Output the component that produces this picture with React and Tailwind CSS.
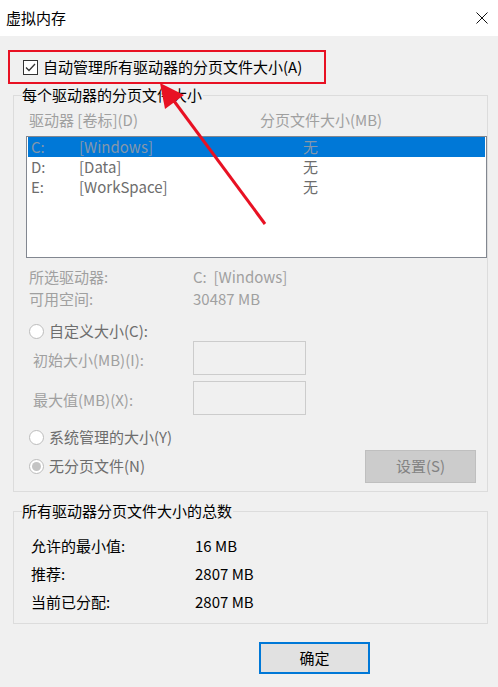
import React from 'react';

const FONT = { fontFamily: '"Noto Sans CJK SC", "Noto Sans", sans-serif' };

// Windows-style radio button (disabled look)
const Radio = ({ checked, label }) => (
  <div className="flex items-center h-[20px]">
    <span className="w-[15px] h-[15px] rounded-full border border-[#bcbcbc] bg-white flex items-center justify-center">
      {checked && <span className="w-[9px] h-[9px] rounded-full bg-[#c4c4c4]" />}
    </span>
    <span className="ml-[5px] text-[#6d6d6d]">{label}</span>
  </div>
);

const GroupBox = ({ title, className, children }) => (
  <div className={`relative border border-[#dcdcdc] ${className}`}>
    <span className="absolute left-[8px] top-[-11px] leading-[20px] bg-[#f0f0f0] pr-[1px] text-black">
      {title}
    </span>
    {children}
  </div>
);

const drives = [
  { letter: 'C:', label: '[Windows]', size: '无', selected: true },
  { letter: 'D:', label: '[Data]', size: '无' },
  { letter: 'E:', label: '[WorkSpace]', size: '无' },
];

const totals = [
  ['允许的最小值:', '16 MB'],
  ['推荐:', '2807 MB'],
  ['当前已分配:', '2807 MB'],
];

export default function App() {
  return (
    <div className="relative w-[498px] h-[687px] overflow-hidden text-[15px] leading-[20px] bg-[#f0f0f0]" style={FONT}>
      {/* Title bar */}
      <div className="h-[36px] bg-white flex items-center justify-between pl-[6px] pr-[10px]">
        <span className="text-black">虚拟内存</span>
        <svg width="12" height="12" viewBox="0 0 12 12" className="mr-[0px]">
          <path d="M0.5 0.5 L11.5 11.5 M11.5 0.5 L0.5 11.5" stroke="#111" strokeWidth="1" />
        </svg>
      </div>

      <div className="pl-[13px] pr-[10px]">
        {/* Auto-manage checkbox (highlighted) */}
        <div className="mt-[14px] -ml-[5px] w-[318px] h-[34px] border-2 border-[#e81123] flex items-center pl-[13px]">
          <span className="w-[15px] h-[15px] border border-[#333] bg-white flex items-center justify-center">
            <svg width="11" height="9" viewBox="0 0 11 9">
              <path d="M1 4.5 L4 7.5 L10 1" fill="none" stroke="#333" strokeWidth="1.3" />
            </svg>
          </span>
          <span className="ml-[5px] text-black">自动管理所有驱动器的分页文件大小(A)</span>
        </div>

        {/* Per-drive group */}
        <GroupBox title="每个驱动器的分页文件大小" className="mt-[11px] h-[397px]">
          <div className="pt-[14px] pl-[15px] flex text-[#a0a0a0]">
            <span className="w-[231px]">驱动器 [卷标](D)</span>
            <span>分页文件大小(MB)</span>
          </div>

          <div className="mt-[6px] ml-[12px] w-[461px] h-[122px] border border-[#828790] bg-white px-[1px]">
            {drives.map((d) => (
              <div
                key={d.letter}
                className={`h-[20px] flex items-center pl-[3px] ${d.selected ? 'bg-[#0078d7] text-[#8497ab]' : 'text-[#6d6d6d]'}`}
              >
                <span className="w-[48px]">{d.letter}</span>
                <span className="w-[224px]">{d.label}</span>
                <span>{d.size}</span>
              </div>
            ))}
          </div>

          <div className="mt-[8px] pl-[15px] text-[#a0a0a0]">
            <div className="h-[22px] flex items-center">
              <span className="w-[164px]">所选驱动器:</span>
              <span>C:&nbsp;&nbsp;[Windows]</span>
            </div>
            <div className="h-[22px] flex items-center">
              <span className="w-[164px]">可用空间:</span>
              <span>30487 MB</span>
            </div>
          </div>

          <div className="mt-[11px] pl-[15px]">
            <Radio label="自定义大小(C):" />
            <div className="flex items-center pl-[4px]">
              <span className="w-[160px] text-[#a0a0a0] pt-[4px]">初始大小(MB)(I):</span>
              <div className="w-[113px] h-[34px] border border-[#cccccc] bg-[#f0f0f0]" />
            </div>
            <div className="mt-[6px] flex items-center pl-[4px]">
              <span className="w-[160px] text-[#a0a0a0] pt-[4px]">最大值(MB)(X):</span>
              <div className="w-[113px] h-[34px] border border-[#cccccc] bg-[#f0f0f0]" />
            </div>
            <div className="mt-[12px]">
              <Radio label="系统管理的大小(Y)" />
            </div>
            <div className="mt-[3px] h-[32px] flex items-center justify-between pr-[11px]">
              <Radio checked label="无分页文件(N)" />
              <div className="w-[111px] h-[33px] border border-[#bfbfbf] bg-[#cccccc] flex items-center justify-center text-[#838383]">
                设置(S)
              </div>
            </div>
          </div>
        </GroupBox>

        {/* Totals group */}
        <GroupBox title="所有驱动器分页文件大小的总数" className="mt-[19px] h-[113px]">
          <div className="pt-[20px] pl-[17px]">
            {totals.map(([k, v]) => (
              <div key={k} className="h-[28px] flex items-center text-black">
                <span className="w-[164px]">{k}</span>
                <span>{v}</span>
              </div>
            ))}
          </div>
        </GroupBox>

        {/* OK button */}
        <div className="mt-[18px] ml-[246px] w-[111px] h-[32px] border-2 border-[#0078d7] bg-[#e1e1e1] flex items-center justify-center text-black">
          确定
        </div>
      </div>

      {/* Annotation arrow */}
      <svg className="absolute left-0 top-0 pointer-events-none" width="498" height="687" viewBox="0 0 498 687">
        <line x1="174" y1="101" x2="265" y2="224" stroke="#e81123" strokeWidth="3" />
        <polygon points="160,83 165,109 184,95" fill="#e81123" />
      </svg>
    </div>
  );
}
